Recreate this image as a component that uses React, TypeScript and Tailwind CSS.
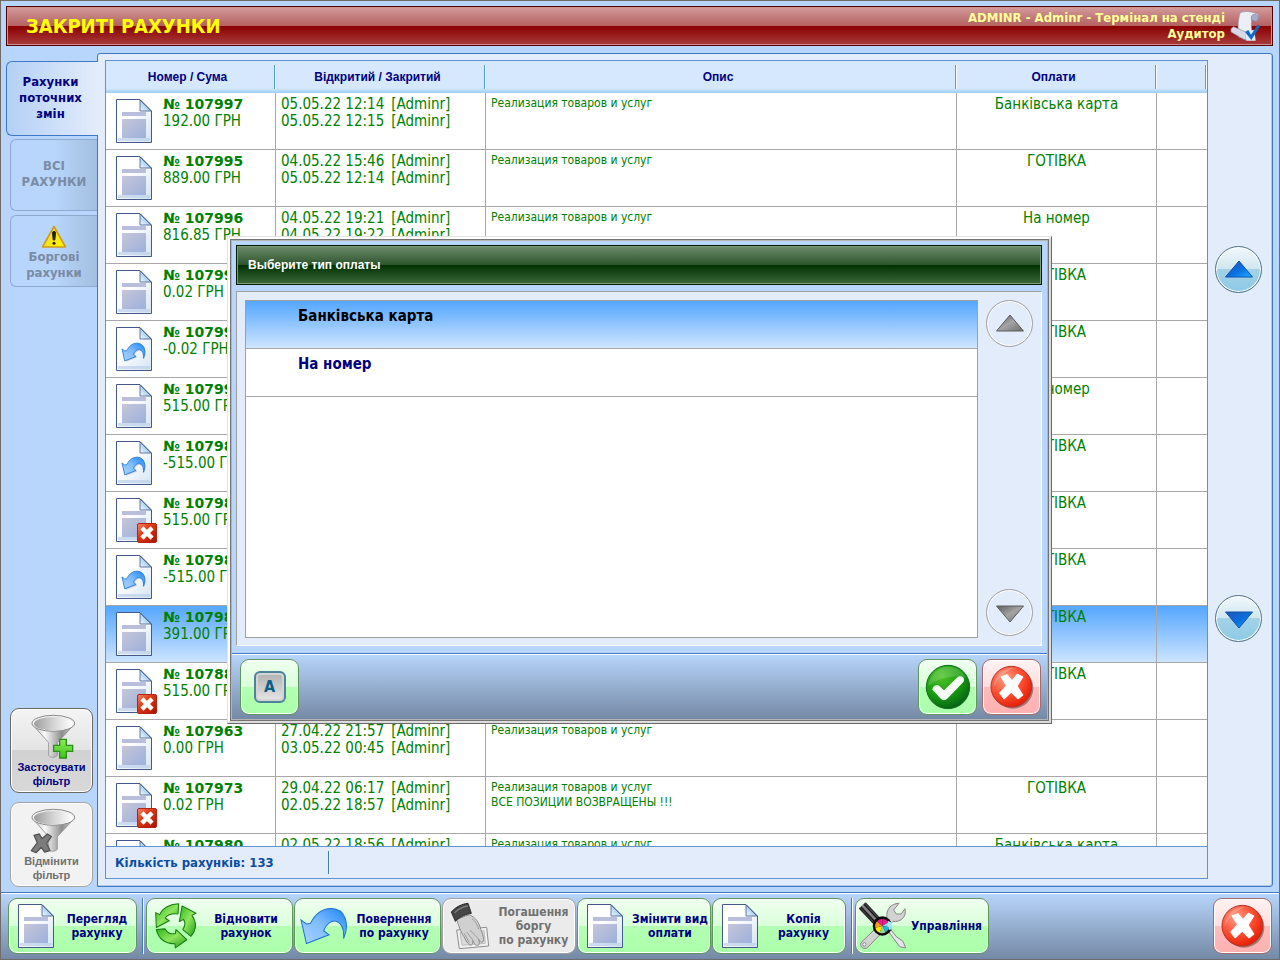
import type { ReactNode } from "react";
import clsx from "clsx";

type IconKind = "doc" | "undo" | "deleted";

interface Bill {
  id: string;
  sum: string;
  opened: string;
  closed: string;
  payment: string;
  kind: IconKind;
  note?: string;
}

const bills: Bill[] = [
  { id: "107997", sum: "192.00", opened: "05.05.22 12:14", closed: "05.05.22 12:15", payment: "Банківська карта", kind: "doc" },
  { id: "107995", sum: "889.00", opened: "04.05.22 15:46", closed: "05.05.22 12:14", payment: "ГОТІВКА", kind: "doc" },
  { id: "107996", sum: "816.85", opened: "04.05.22 19:21", closed: "04.05.22 19:22", payment: "На номер", kind: "doc" },
  { id: "107994", sum: "0.02", opened: "04.05.22 15:40", closed: "04.05.22 15:41", payment: "ГОТІВКА", kind: "doc" },
  { id: "107993", sum: "-0.02", opened: "04.05.22 15:38", closed: "04.05.22 15:39", payment: "ГОТІВКА", kind: "undo" },
  { id: "107990", sum: "515.00", opened: "04.05.22 14:20", closed: "04.05.22 14:25", payment: "На номер", kind: "doc" },
  { id: "107989", sum: "-515.00", opened: "04.05.22 14:10", closed: "04.05.22 14:11", payment: "ГОТІВКА", kind: "undo" },
  { id: "107988", sum: "515.00", opened: "04.05.22 14:02", closed: "04.05.22 14:05", payment: "ГОТІВКА", kind: "deleted" },
  { id: "107986", sum: "-515.00", opened: "04.05.22 13:50", closed: "04.05.22 13:51", payment: "ГОТІВКА", kind: "undo" },
  { id: "107984", sum: "391.00", opened: "04.05.22 13:32", closed: "04.05.22 13:40", payment: "ГОТІВКА", kind: "doc" },
  { id: "107883", sum: "515.00", opened: "03.05.22 13:12", closed: "03.05.22 13:20", payment: "ГОТІВКА", kind: "deleted" },
  { id: "107963", sum: "0.00", opened: "27.04.22 21:57", closed: "03.05.22 00:45", payment: "", kind: "doc" },
  { id: "107973", sum: "0.02", opened: "29.04.22 06:17", closed: "02.05.22 18:57", payment: "ГОТІВКА", kind: "deleted", note: "ВСЕ ПОЗИЦИИ ВОЗВРАЩЕНЫ !!!" },
  { id: "107980", sum: "120.00", opened: "02.05.22 18:56", closed: "02.05.22 18:57", payment: "Банківська карта", kind: "doc" },
];

const selectedBill = "107984";

const paymentTypes = ["Банківська карта", "На номер"];

/* Gradients shared by all icons */
function IconDefs() {
  return (
    <svg width="0" height="0" className="absolute" aria-hidden="true">
      <defs>
        <linearGradient id="paper" x1="0" y1="0" x2="1" y2="1">
          <stop offset="0.4" stopColor="#ffffff" />
          <stop offset="1" stopColor="#d3e3f3" />
        </linearGradient>
        <linearGradient id="block" x1="0" y1="0" x2="1" y2="1">
          <stop offset="0" stopColor="#c6c6d8" />
          <stop offset="1" stopColor="#9db0dc" />
        </linearGradient>
        <linearGradient id="fold" x1="0" y1="1" x2="1" y2="0">
          <stop offset="0" stopColor="#f4faff" />
          <stop offset="1" stopColor="#5fa9e0" />
        </linearGradient>
        <linearGradient id="blueArrow" x1="0" y1="1" x2="1" y2="0">
          <stop offset="0" stopColor="#a8d4ff" />
          <stop offset="0.5" stopColor="#7fbcff" />
          <stop offset="1" stopColor="#1a84f5" />
        </linearGradient>
        <linearGradient id="redBadge" x1="0" y1="0" x2="1" y2="1">
          <stop offset="0" stopColor="#f58a6c" />
          <stop offset="0.4" stopColor="#e03a14" />
          <stop offset="1" stopColor="#a81000" />
        </linearGradient>
        <radialGradient id="redBall" cx="0.35" cy="0.3" r="0.8">
          <stop offset="0" stopColor="#ff9f86" />
          <stop offset="0.55" stopColor="#fb4a2c" />
          <stop offset="1" stopColor="#e01400" />
        </radialGradient>
        <radialGradient id="greenBall" cx="0.35" cy="0.25" r="0.85">
          <stop offset="0" stopColor="#4fc52a" />
          <stop offset="0.55" stopColor="#169a0c" />
          <stop offset="1" stopColor="#04561c" />
        </radialGradient>
        <linearGradient id="recycle" x1="0" y1="0" x2="1" y2="1">
          <stop offset="0" stopColor="#2fb51d" />
          <stop offset="0.5" stopColor="#8ee65c" />
          <stop offset="1" stopColor="#1c9a14" />
        </linearGradient>
        <linearGradient id="metal" x1="0" y1="0" x2="1" y2="0">
          <stop offset="0" stopColor="#b4b4b4" />
          <stop offset="0.3" stopColor="#fafafa" />
          <stop offset="0.7" stopColor="#8e8e8e" />
          <stop offset="1" stopColor="#d8d8d8" />
        </linearGradient>
        <linearGradient id="bowl" x1="0" y1="0" x2="1" y2="0">
          <stop offset="0" stopColor="#9c9c9c" />
          <stop offset="0.5" stopColor="#d4d4d4" />
          <stop offset="1" stopColor="#ffffff" />
        </linearGradient>
        <linearGradient id="plus" x1="0" y1="0" x2="0" y2="1">
          <stop offset="0" stopColor="#8dea5a" />
          <stop offset="1" stopColor="#3fc41d" />
        </linearGradient>
        <linearGradient id="triBlue" x1="0" y1="0" x2="1" y2="1">
          <stop offset="0.2" stopColor="#1a5ec4" />
          <stop offset="0.55" stopColor="#0a70e0" />
          <stop offset="0.9" stopColor="#1ba0ff" />
        </linearGradient>
        <linearGradient id="triGray" x1="0" y1="0" x2="1" y2="1">
          <stop offset="0.1" stopColor="#6a6a6a" />
          <stop offset="0.5" stopColor="#a4a4a4" />
          <stop offset="0.9" stopColor="#787878" />
        </linearGradient>
        <linearGradient id="warn" x1="0" y1="0" x2="1" y2="0.6">
          <stop offset="0" stopColor="#fff08a" />
          <stop offset="0.5" stopColor="#f6e31c" />
          <stop offset="1" stopColor="#fff200" />
        </linearGradient>
        <linearGradient id="darkBar" x1="0" y1="0" x2="1" y2="0">
          <stop offset="0" stopColor="#161616" />
          <stop offset="0.5" stopColor="#8a8a8a" />
          <stop offset="1" stopColor="#222222" />
        </linearGradient>
      </defs>
    </svg>
  );
}

const undoPath =
  "M3 38 L19 108 L86 82 L70 70 C77 50 93 39 107 42 C124 48 131 64 129 93 C146 56 138 4 92 4 C62 4 43 24 31 48 L19 50 Z";

function Sheet({ lines = true }: { lines?: boolean }) {
  return (
    <>
      <path d="M0.5 0.5 H24 L35.5 12 V43.5 H0.5 Z" fill="url(#paper)" stroke="#43598c" />
      <path d="M2 39 H34 V42 H2 Z" fill="#bcd0ea" opacity="0.7" />
      <path d="M24 1 V12 H35 Z" fill="url(#fold)" stroke="#43598c" strokeWidth="0.8" />
      {lines && (
        <>
          <path d="M6 13 H30 V17 H6 Z" fill="#b8bedb" />
          <path d="M6 20 H30 V39 H6 Z" fill="url(#block)" />
        </>
      )}
    </>
  );
}

function DocIcon({ kind }: { kind: IconKind }) {
  return (
    <svg width="42" height="46" viewBox="0 0 42 46" className="shrink-0" aria-hidden="true">
      <Sheet lines={kind !== "undo"} />
      {kind === "undo" && (
        <>
          <path d={undoPath} transform="translate(7 17) scale(0.165)" fill="#7c8796" opacity="0.35" />
          <path d={undoPath} transform="translate(5.5 15.5) scale(0.17)" fill="url(#blueArrow)" stroke="#2277cf" strokeWidth="5" />
        </>
      )}
      {kind === "deleted" && (
        <>
          <rect x="21.5" y="25.5" width="19" height="19" rx="1.5" fill="url(#redBadge)" stroke="#b02410" />
          <path d="M27.5 31.5 L34.5 38.5 M34.5 31.5 L27.5 38.5" stroke="#ffffff" strokeWidth="4.5" strokeLinecap="square" />
        </>
      )}
    </svg>
  );
}

function SheetIcon() {
  return (
    <svg width="36" height="44" viewBox="0 0 36 44" aria-hidden="true">
      <Sheet />
    </svg>
  );
}

function UndoIcon() {
  return (
    <svg width="48" height="38" viewBox="0 0 142 112" aria-hidden="true">
      <path d={undoPath} fill="url(#blueArrow)" stroke="#1f74cc" strokeWidth="3" />
    </svg>
  );
}

function RecycleIcon() {
  return (
    <svg width="42" height="46" viewBox="0 0 124 135" aria-hidden="true">
      <g fill="url(#recycle)" stroke="#137d10" strokeWidth="3" strokeLinejoin="round">
        <path d="M70 2 C45 2 22 14 14 34 L2 28 L4 72 L42 52 L30 44 C37 34 50 30 68 32 Z" />
        <path d="M80 8 L121 30 L109 36 C124 58 122 80 106 98 L82 78 C90 66 90 56 84 48 L72 54 Z" />
        <path d="M4 78 L30 76 C38 90 50 92 60 90 L62 78 L94 108 L60 132 L59 120 C34 120 10 108 4 78 Z" />
      </g>
    </svg>
  );
}

function HandIcon() {
  return (
    <svg width="40" height="48" viewBox="0 0 120 144" aria-hidden="true">
      <path d="M20 84 L110 76 L116 132 L28 140 Z" fill="#f2f2f2" stroke="#8e8e8e" strokeWidth="3" />
      <path d="M30 92 L102 86 L106 124 L36 130 Z" fill="#dcdcdc" stroke="#a6a6a6" strokeWidth="2" />
      <path
        d="M20 52 L58 38 C76 46 88 62 92 82 C98 96 104 112 98 120 C94 124 90 118 86 112 C90 124 88 132 80 130 C76 130 72 124 68 116 C70 126 64 132 58 128 C50 122 46 112 42 104 C36 98 28 78 20 52 Z"
        fill="#d0d0d0"
        stroke="#8a8a8a"
        strokeWidth="3"
      />
      <path d="M60 84 L86 112 M50 90 L70 116 M42 94 L58 122 M66 50 C76 58 84 70 86 82" fill="none" stroke="#949494" strokeWidth="2.5" />
      <path d="M4 30 C18 14 36 6 54 4 L64 34 C48 36 30 44 16 58 Z" fill="#464646" stroke="#2c2c2c" strokeWidth="3" />
      <path d="M14 32 C26 20 40 14 54 12" fill="none" stroke="#7c7c7c" strokeWidth="4" />
    </svg>
  );
}

function ToolsIcon() {
  return (
    <svg width="48" height="48" viewBox="0 0 144 144" aria-hidden="true">
      <path
        d="M6 122 L84 46 C80 24 96 4 120 4 L104 24 L112 36 L126 36 L138 20 C144 44 124 62 102 58 L26 136 C18 144 0 136 6 122 Z"
        fill="#d2d2d2"
        stroke="#868686"
        strokeWidth="3"
      />
      <circle cx="16" cy="127" r="5" fill="#f4fff4" stroke="#868686" strokeWidth="3" />
      <path d="M84 82 L90 76 L112 104 L132 118 L140 138 L122 134 L104 110 Z" fill="#e6e6e6" stroke="#868686" strokeWidth="3" />
      <g transform="rotate(-43 34 36)">
        <rect x="20" y="0" width="28" height="68" rx="3" fill="url(#darkBar)" />
        <path d="M28 2 V66 M40 2 V66" stroke="#0d0d0d" strokeWidth="3" />
      </g>
      <circle cx="70" cy="72" r="29" fill="#0b0b0b" />
      <path d="M70 72 L70 51 A21 21 0 0 1 88 61 Z" fill="#ec1c8c" />
      <path d="M70 72 L88 61 A21 21 0 0 1 91 76 Z" fill="#8fd8f0" />
      <path d="M70 72 L91 76 A21 21 0 0 1 80 91 Z" fill="#1fb5e0" />
      <path d="M70 72 L80 91 A21 21 0 0 1 62 92 Z" fill="#8fd8a0" />
      <path d="M70 72 L62 92 A21 21 0 0 1 49 77 Z" fill="#ffe600" />
      <path d="M70 72 L49 77 A21 21 0 0 1 54 58 Z" fill="#f79a1e" />
      <path d="M70 72 L54 58 A21 21 0 0 1 70 51 Z" fill="#e8208c" />
      <path d="M86 56 L100 62 L98 82 L90 84 Z" fill="#a8e8f4" />
    </svg>
  );
}

function CloseBall() {
  return (
    <svg width="44" height="44" viewBox="0 0 132 132" aria-hidden="true">
      <circle cx="69" cy="70" r="61" fill="#7a5a5a" opacity="0.7" />
      <circle cx="64" cy="65" r="61" fill="url(#redBall)" stroke="#b53324" strokeWidth="3" />
      <path d="M10 70 C14 30 40 10 70 8 C50 20 22 36 10 70 Z" fill="#ffffff" opacity="0.2" />
      <path d="M34 36 L51 30 L66 48 L82 28 L98 36 L81 63 L98 90 L84 101 L64 80 L42 101 L30 84 L50 62 Z" fill="#ffffff" stroke="#ffffff" strokeWidth="4" strokeLinejoin="round" />
    </svg>
  );
}

function CheckBall() {
  return (
    <svg width="46" height="46" viewBox="0 0 138 138" aria-hidden="true">
      <circle cx="69" cy="69" r="65" fill="url(#greenBall)" stroke="#0d6e16" strokeWidth="3" />
      <path d="M10 66 C14 30 42 8 74 8 C100 10 116 24 124 42 C84 30 40 42 10 66 Z" fill="#ffffff" opacity="0.16" />
      <path d="M24 76 C26 66 36 64 40 66 L57 82 L98 42 C106 34 118 42 114 52 L66 102 C60 108 54 108 48 102 Z" fill="#f6fbf6" stroke="#f6fbf6" strokeWidth="4" />
    </svg>
  );
}

function FunnelIcon({ cleared = false }: { cleared?: boolean }) {
  return (
    <svg width="48" height="46" viewBox="0 0 144 138" aria-hidden="true">
      <path d="M12 30 L62 86 V124 C66 132 80 132 88 124 V86 L140 30 Z" fill="url(#metal)" stroke="#8f8f8f" strokeWidth="2.5" />
      <ellipse cx="76" cy="28" rx="64" ry="24" fill="#f0f0f0" stroke="#8a8a8a" strokeWidth="3" />
      <ellipse cx="76" cy="29" rx="58" ry="20" fill="url(#bowl)" />
      {cleared ? (
        <path
          d="M18 82 L34 78 L42 92 L58 78 L70 86 L56 106 L66 128 L50 132 L40 118 L24 134 L10 128 L28 104 Z"
          fill="#7c7c7c"
          stroke="#565656"
          strokeWidth="4"
          strokeLinejoin="round"
        />
      ) : (
        <path d="M95 76 H115 V94 H134 V112 H115 V132 H95 V112 H77 V94 H95 Z" fill="url(#plus)" stroke="#2b8f18" strokeWidth="4" />
      )}
    </svg>
  );
}

function WarningIcon() {
  return (
    <svg width="26" height="24" viewBox="0 0 26 24" aria-hidden="true">
      <path d="M13 1.5 L24.5 22 H1.5 Z" fill="url(#warn)" stroke="#d09a1c" strokeWidth="1.6" strokeLinejoin="round" />
      <path d="M11.5 7.5 C11.5 6 14.5 6 14.5 7.5 L13.8 15 H12.2 Z" fill="#26200a" stroke="#26200a" />
      <circle cx="13" cy="18.3" r="1.5" fill="#26200a" />
    </svg>
  );
}

function ScrollIcon() {
  return (
    <svg width="32" height="32" viewBox="0 0 96 96" aria-hidden="true">
      <path d="M34 8 C48 2 68 4 84 12 C92 18 90 32 80 34 L68 30 C66 44 66 58 74 88 L30 82 C26 60 26 30 34 8 Z" fill="#eeeef6" stroke="#9a9ab4" strokeWidth="2" />
      <path d="M68 30 C64 18 70 12 80 14 C90 16 90 32 80 34 Z" fill="#a9acc8" stroke="#74789c" strokeWidth="2" />
      <path d="M6 56 L14 50 L50 66 L52 90 L44 88 L6 66 Z" fill="#d8d8e6" stroke="#8688a4" strokeWidth="2" />
      <path d="M48 62 L52 92 H80 L76 60 Z" fill="#dcecf8" />
      <path d="M48 66 L58 60 L66 74 L86 44 L94 48 L67 90 Z" fill="#1168c8" />
    </svg>
  );
}

function ArrowButton({ dir, muted, label }: { dir: "up" | "down"; muted?: boolean; label: string }) {
  return (
    <button
      type="button"
      aria-label={label}
      disabled={muted}
      className={clsx(
        "flex h-[47px] w-[47px] shrink-0 items-center justify-center rounded-full border shadow-[inset_0_0_0_1px_#fff]",
        muted
          ? "border-[#a0a0a0] bg-[#e3ecfb]"
          : "border-[#4f7486] bg-[linear-gradient(#f2f8fc,#cfe6f0_50%,#a4d2e6_50%,#8ccae6)]"
      )}
    >
      <svg width="30" height="20" viewBox="0 0 30 20" aria-hidden="true">
        <path
          d={dir === "up" ? "M15 1 L28.5 17 H1.5 Z" : "M15 19 L28.5 3 H1.5 Z"}
          fill={muted ? "url(#triGray)" : "url(#triBlue)"}
          stroke={muted ? "#5c5c5c" : "#1450b0"}
        />
      </svg>
    </button>
  );
}

interface ToolButtonProps {
  icon: ReactNode;
  lines: string[];
  size?: "small" | "normal" | "wide";
  disabled?: boolean;
}

function ToolButton({ icon, lines, size = "normal", disabled }: ToolButtonProps) {
  return (
    <button
      type="button"
      disabled={disabled}
      className={clsx(
        "flex h-14 shrink-0 items-center rounded-[9px] border pr-[5px] text-[12px] leading-[14px] font-bold shadow-[inset_0_0_0_1px_#fff]",
        size === "small" && "w-[129px]",
        size === "normal" && "w-[134px]",
        size === "wide" && "w-[147px]",
        disabled
          ? "border-[#a0a0a0] bg-[#ebebeb] text-[#707070]"
          : "border-[#5f965f] bg-[linear-gradient(#f0fff0,#d9ffd9_50%,#b4ffb4_50%,#aaffaa)] text-[#000080]"
      )}
    >
      <span className={clsx("flex shrink-0 justify-center", size === "wide" ? "w-[58px]" : "w-[54px]")}>{icon}</span>
      <span className="flex flex-1 flex-col items-center whitespace-nowrap">
        {lines.map((line) => (
          <span key={line}>{line}</span>
        ))}
      </span>
    </button>
  );
}

function SquareButton({ tone, label, children }: { tone: "green" | "red"; label: string; children: ReactNode }) {
  return (
    <button
      type="button"
      aria-label={label}
      className={clsx(
        "flex h-14 w-[59px] shrink-0 items-center justify-center rounded-[9px] border shadow-[inset_0_0_0_1px_#fff]",
        tone === "green"
          ? "border-[#5f965f] bg-[linear-gradient(#f0fff0,#d9ffd9_50%,#b4ffb4_50%,#aaffaa)]"
          : "border-[#a56a70] bg-[linear-gradient(#fff2f2,#ffdede_50%,#ffbcbc_50%,#ffb0b0)]"
      )}
    >
      {children}
    </button>
  );
}

function Divider() {
  return <span className="mr-[2px] ml-[5px] h-14 w-[2px] shrink-0 border-l border-[#3f78c0] bg-white" />;
}

function Sidebar() {
  const tab =
    "ml-1 flex h-[72px] flex-col items-center rounded-l-[6px] border border-r-0 border-[#8fa9cc] bg-[linear-gradient(90deg,#b8d6fb_50%,#a3bfe0)] text-[13px] leading-4 font-bold text-[#7a8ba6]";

  return (
    <nav className="flex w-[91px] shrink-0 flex-col pt-2">
      <button
        type="button"
        className="relative z-10 -mr-px flex h-[75px] flex-col items-center justify-center rounded-l-[6px] border border-r-0 border-[#3f78c4] bg-[linear-gradient(90deg,#b4d0f6,#e3ecfb)] pr-1 pb-[2px] text-[13px] leading-4 font-bold text-[#000080]"
      >
        <span>Рахунки</span>
        <span>поточних</span>
        <span>змін</span>
      </button>
      <button type="button" className={clsx(tab, "mt-[3px] justify-center pb-[2px]")}>
        <span>ВСІ</span>
        <span>РАХУНКИ</span>
      </button>
      <button type="button" className={clsx(tab, "mt-1 pt-[9px]")}>
        <WarningIcon />
        <span>Боргові</span>
        <span>рахунки</span>
      </button>

      <div className="mt-auto ml-1 flex flex-col gap-[9px] font-['Liberation_Sans',Arial,sans-serif] text-[11px] leading-[14px] font-bold">
        <button
          type="button"
          className="flex h-[85px] w-[83px] flex-col items-center rounded-[9px] border border-[#686868] bg-[linear-gradient(#f4f4f4,#e4e4e4_50%,#d2d2d2_50%,#d8d8d8)] pt-[5px] text-[#000080] shadow-[inset_0_0_0_1px_#fff]"
        >
          <FunnelIcon />
          <span>Застосувати</span>
          <span>фільтр</span>
        </button>
        <button
          type="button"
          disabled
          className="flex h-[85px] w-[83px] flex-col items-center rounded-[9px] border border-[#a4a4a4] bg-[#f2f2f2] pt-[5px] text-[#707070] shadow-[inset_0_0_0_1px_#fff]"
        >
          <FunnelIcon cleared />
          <span>Відмінити</span>
          <span>фільтр</span>
        </button>
      </div>
    </nav>
  );
}

function BillRow({ bill }: { bill: Bill }) {
  const active = bill.id === selectedBill;
  return (
    <tr
      className={clsx(
        "h-[57px] align-top",
        active ? "bg-[linear-gradient(#54a6ff,#cfe5ff)]" : "bg-white",
        "[&>td]:border-b [&>td]:border-[#a8a8a8] [&>td]:pt-[3px] [&>td:not(:last-child)]:border-r"
      )}
    >
      <td>
        <div className="flex gap-[5px] overflow-hidden pl-[10px]">
          <div className="mt-[3px] flex">
            <DocIcon kind={bill.kind} />
          </div>
          <div className="whitespace-nowrap">
            <div className="font-['DejaVu_Sans',Verdana,sans-serif] text-[14px] font-bold">№ {bill.id}</div>
            <div>{bill.sum} ГРН</div>
          </div>
        </div>
      </td>
      <td className="pl-[5px]">
        <div className="flex gap-[7px]">
          <span>{bill.opened}</span>
          <span>[Adminr]</span>
        </div>
        <div className="flex gap-[7px]">
          <span>{bill.closed}</span>
          <span>[Adminr]</span>
        </div>
      </td>
      <td className="pl-[5px] text-[12px] leading-[15px]">
        <div>Реализация товаров и услуг</div>
        {bill.note && <div>{bill.note}</div>}
      </td>
      <td className="text-center">{bill.payment}</td>
      <td />
    </tr>
  );
}

function BillTable() {
  const columns = ["Номер / Сума", "Відкритий / Закритий", "Опис", "Оплати", ""];

  return (
    <section className="flex min-w-0 flex-1 flex-col border border-[#5f92d0] bg-white">
      <div className="min-h-0 flex-1 overflow-hidden">
        <table className="w-full table-fixed border-separate border-spacing-0 text-[15px] leading-[17px] text-[#008000]">
          <colgroup>
            <col className="w-[170px]" />
            <col className="w-[210px]" />
            <col />
            <col className="w-[200px]" />
            <col className="w-[50px]" />
          </colgroup>
          <thead>
            <tr className="h-8 bg-[linear-gradient(#d6e8fd_85%,#9fcdf8)] font-['Liberation_Sans',Arial,sans-serif] text-[12px] leading-[14px] text-[#000080]">
              {columns.map((name) => (
                <th key={name} className="p-0 font-bold">
                  <div className="mr-px flex h-6 items-center justify-center border-r border-[#4f9be8] pr-[5px] shadow-[1px_0_0_#fff]">
                    {name}
                  </div>
                </th>
              ))}
            </tr>
          </thead>
          <tbody>
            {bills.map((bill) => (
              <BillRow key={bill.id} bill={bill} />
            ))}
          </tbody>
        </table>
      </div>
      <footer className="flex h-8 shrink-0 items-center border-t border-[#5f92d0] bg-[#e3ecfb] pl-[9px] text-[13px] font-bold text-[#0b4da2]">
        <span className="w-[213px]">Кількість рахунків: 133</span>
        <span className="h-[23px] w-[2px] border-l border-[#3f78c0] bg-white" />
      </footer>
    </section>
  );
}

function PaymentDialog() {
  return (
    <div className="fixed inset-0 z-20 flex items-center justify-center pr-px">
      <div
        role="dialog"
        aria-labelledby="payment-title"
        className="w-[825px] max-w-full border border-t-[#e3e3e3] border-r-[#696969] border-b-[#696969] border-l-[#e3e3e3]"
      >
        <div className="border-2 border-t-white border-r-[#dcdcdc] border-b-[#dcdcdc] border-l-white">
          <div className="border border-[#747474]">
            <div className="border border-[#b4b4b4] bg-[#b8d6fb]">
              <div className="pt-1 pr-[5px] pb-[7px] pl-1">
                <h2
                  id="payment-title"
                  className="flex h-10 items-center border border-[#001c00] bg-[linear-gradient(#6d8c6d,#2c542c_50%,#003000_50%,#3c683c)] pl-[11px] font-['Liberation_Sans',Arial,sans-serif] text-[12px] font-bold text-white shadow-[inset_0_0_0_1px_#7d9c7d]"
                >
                  Выберите тип оплаты
                </h2>
                <div className="mt-[6px] flex gap-2 border border-t-[#a0a0a0] border-r-white border-b-white border-l-[#a0a0a0] bg-[#e3ecfb] px-2 pt-2 pb-[7px]">
                  <ul className="h-[338px] min-w-0 flex-1 border border-[#a0a0a0] bg-white">
                    {paymentTypes.map((type, i) => (
                      <li key={type}>
                        <button
                          type="button"
                          className={clsx(
                            "flex h-12 w-full border-b border-[#a8a8a8] pt-[7px] pl-[52px] text-[15px] leading-[17px] font-bold",
                            i === 0 ? "bg-[linear-gradient(#54a6ff,#cfe5ff)] text-black" : "bg-white text-[#000080]"
                          )}
                        >
                          {type}
                        </button>
                      </li>
                    ))}
                  </ul>
                  <div className="flex flex-col justify-between pb-[2px]">
                    <ArrowButton dir="up" muted label="Вгору" />
                    <ArrowButton dir="down" muted label="Вниз" />
                  </div>
                </div>
              </div>
              <div className="flex h-[66px] items-start gap-[5px] border-t border-[#3f78c0] bg-[linear-gradient(#b8d6fb,#7489a5)] px-2 pt-[5px] pr-[6px] shadow-[inset_0_1px_0_#fff]">
                <SquareButton tone="green" label="Клавіатура">
                  <span className="flex h-8 w-8 items-center justify-center rounded-[6px] border-2 border-[#4d849c] bg-[linear-gradient(#b0b0b0,#e6e6e6)] text-[16px] font-bold text-[#0a5f84] shadow-[inset_0_0_0_2px_#d4d4d4]">
                    A
                  </span>
                </SquareButton>
                <span className="flex-1" />
                <SquareButton tone="green" label="Підтвердити">
                  <CheckBall />
                </SquareButton>
                <SquareButton tone="red" label="Скасувати">
                  <CloseBall />
                </SquareButton>
              </div>
            </div>
          </div>
        </div>
      </div>
    </div>
  );
}

export default function App() {
  return (
    <div className="flex h-screen flex-col border border-[#6f6b6b] bg-[#b8d6fb] font-['DejaVu_Sans_Condensed','DejaVu_Sans',Tahoma,sans-serif]">
      <IconDefs />

      <header className="mt-[5px] mr-[6px] ml-[5px] flex h-10 shrink-0 items-center justify-between border border-[#500000] bg-[linear-gradient(#d49c9c,#b46060_50%,#8b0000_50%,#a83c3c)] pr-[11px] pl-[19px] shadow-[inset_0_0_0_1px_#d09090]">
        <h1 className="text-[20px] font-bold text-[#ffff00]">ЗАКРИТІ РАХУНКИ</h1>
        <div className="flex items-center gap-1">
          <div className="text-right text-[13px] leading-4 font-bold text-[#ffff99]">
            <div>ADMINR - Adminr - Термінал на стенді</div>
            <div>Аудитор</div>
          </div>
          <ScrollIcon />
        </div>
      </header>

      <main className="mt-[7px] mr-[6px] mb-[5px] ml-[5px] flex min-h-0 flex-1">
        <Sidebar />
        <div className="flex min-w-0 flex-1 rounded-[3px] rounded-bl-none border border-[#3f78c4] bg-[#e3ecfb] pt-[6px] pb-[7px] pl-[7px] shadow-[inset_-1px_-1px_0_#b4c8e8]">
          <BillTable />
          <div className="flex shrink-0 flex-col justify-between pt-[186px] pr-[10px] pb-[237px] pl-[7px]">
            <ArrowButton dir="up" label="Вгору" />
            <ArrowButton dir="down" label="Вниз" />
          </div>
        </div>
      </main>

      <footer className="flex h-[67px] shrink-0 items-start border-t border-[#3f78c0] bg-[linear-gradient(#b8d6fb,#7489a5)] pt-[5px] pr-[7px] pl-[7px] shadow-[inset_0_1px_0_#fff]">
        <ToolButton size="small" icon={<SheetIcon />} lines={["Перегляд", "рахунку"]} />
        <Divider />
        <div className="flex gap-px">
          <ToolButton size="wide" icon={<RecycleIcon />} lines={["Відновити", "рахунок"]} />
          <ToolButton size="wide" icon={<UndoIcon />} lines={["Повернення", "по рахунку"]} />
          <ToolButton disabled icon={<HandIcon />} lines={["Погашення", "боргу", "по рахунку"]} />
          <ToolButton icon={<SheetIcon />} lines={["Змінити вид", "оплати"]} />
          <ToolButton icon={<SheetIcon />} lines={["Копія", "рахунку"]} />
        </div>
        <Divider />
        <ToolButton icon={<ToolsIcon />} lines={["Управління"]} />
        <span className="flex-1" />
        <SquareButton tone="red" label="Закрити">
          <CloseBall />
        </SquareButton>
      </footer>

      <PaymentDialog />
    </div>
  );
}
